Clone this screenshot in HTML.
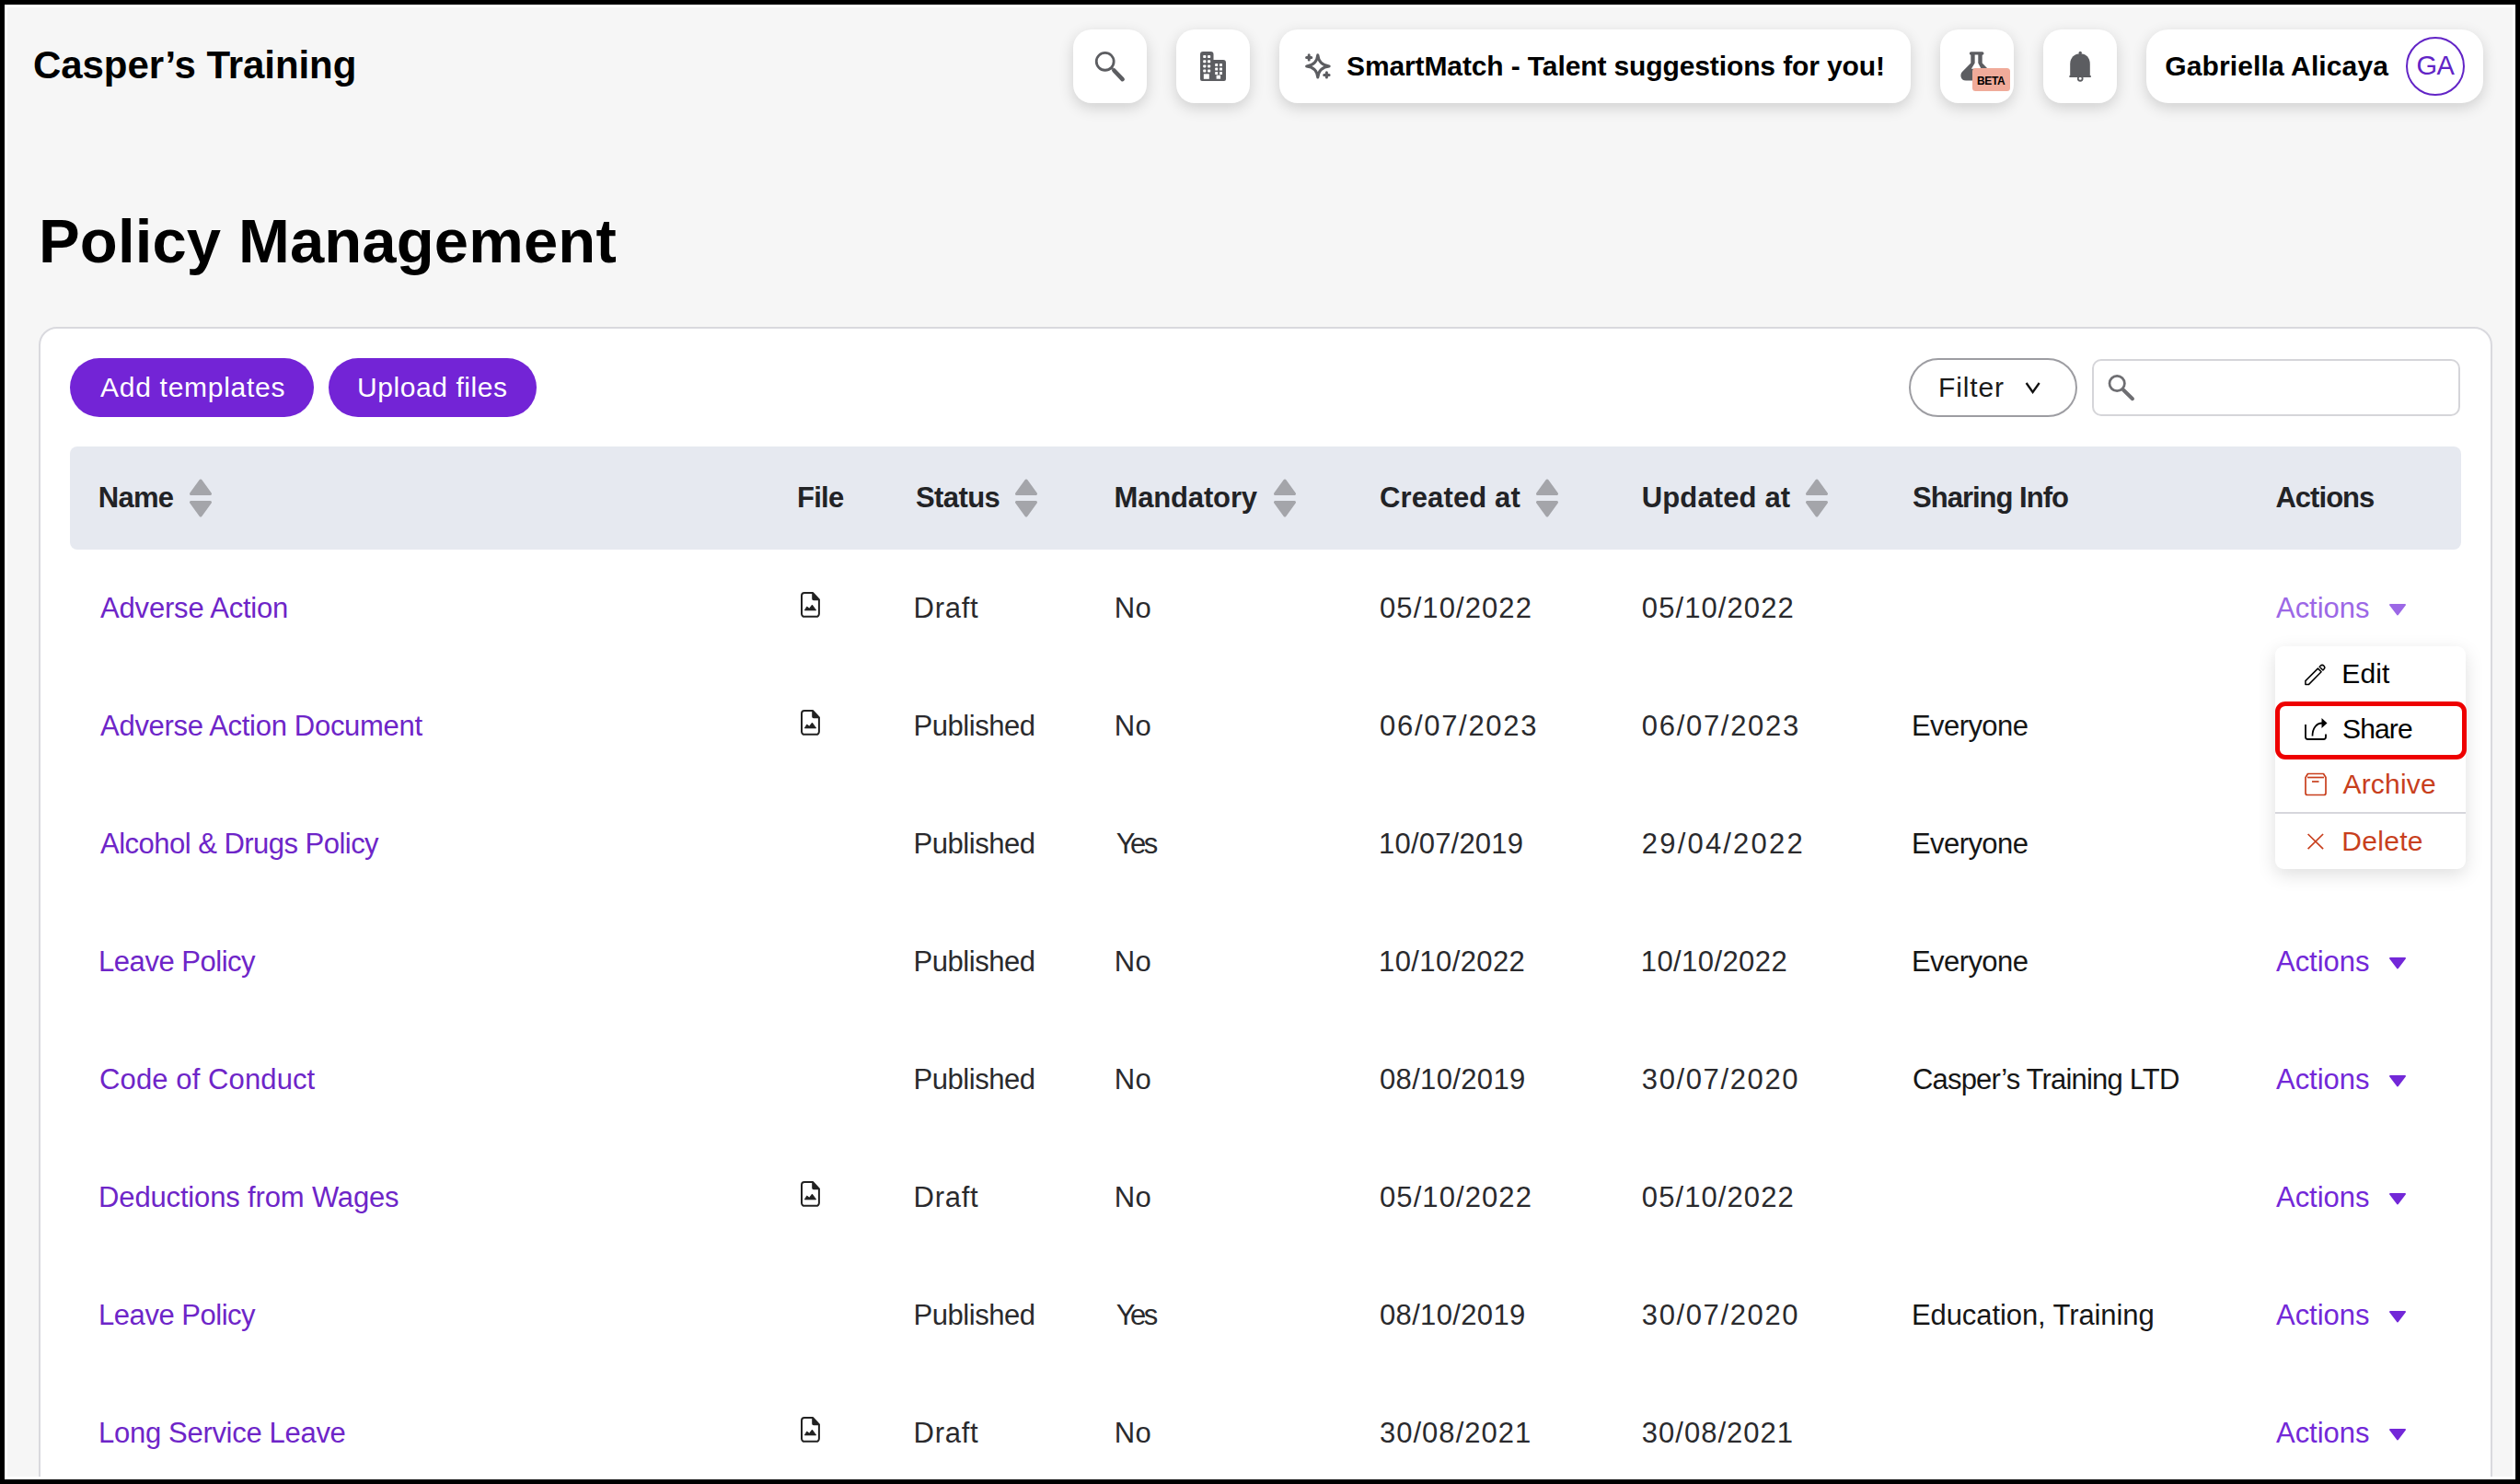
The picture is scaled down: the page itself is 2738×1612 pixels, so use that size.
<!DOCTYPE html>
<html><head><meta charset="utf-8"><title>Policy Management</title>
<style>
html,body{margin:0;padding:0;}
body{width:2738px;height:1612px;background:#000;position:relative;overflow:hidden;font-family:"Liberation Sans",sans-serif;}
#frame{position:absolute;left:5px;top:5px;width:2728px;height:1602px;background:#fff;}
#page{position:absolute;left:8px;top:8px;width:2722px;height:1596px;background:#f6f6f6;overflow:hidden;}
#inner{position:absolute;left:-8px;top:-8px;width:2738px;height:1612px;}
.t{position:absolute;line-height:1;white-space:nowrap;}
.b{position:absolute;display:block;}
</style></head><body>
<div id="frame"></div>
<div id="page"><div id="inner">
<div class="t" style="left:36.00px;top:50.45px;font-size:42px;font-weight:700;color:#000;letter-spacing:-0.068px;">Casper&#8217;s Training</div>
<div class="b" style="left:1166px;top:32px;width:80px;height:80px;background:#fff;border-radius:20px;box-shadow:0 5px 16px rgba(0,0,0,0.16);"></div>
<div class="b" style="left:1278px;top:32px;width:80px;height:80px;background:#fff;border-radius:20px;box-shadow:0 5px 16px rgba(0,0,0,0.16);"></div>
<div class="b" style="left:1390px;top:32px;width:686px;height:80px;background:#fff;border-radius:20px;box-shadow:0 5px 16px rgba(0,0,0,0.16);"></div>
<div class="b" style="left:2108px;top:32px;width:80px;height:80px;background:#fff;border-radius:20px;box-shadow:0 5px 16px rgba(0,0,0,0.16);"></div>
<div class="b" style="left:2220px;top:32px;width:80px;height:80px;background:#fff;border-radius:20px;box-shadow:0 5px 16px rgba(0,0,0,0.16);"></div>
<div class="b" style="left:2332px;top:32px;width:366px;height:80px;background:#fff;border-radius:20px;box-shadow:0 5px 16px rgba(0,0,0,0.16);border-radius:24px;"></div>
<svg class="b" style="left:1186px;top:52px;" width="40" height="40" viewBox="0 0 40 40"><circle cx="14.7" cy="14.8" r="9.45" fill="none" stroke="#5c5d61" stroke-width="2.8"/><line x1="21.5" y1="21.6" x2="23" y2="23.1" stroke="#5c5d61" stroke-width="2.8"/><line x1="24.4" y1="24.5" x2="33.6" y2="34.1" stroke="#5c5d61" stroke-width="4.6" stroke-linecap="round"/></svg>
<svg class="b" style="left:1304px;top:56px;" width="28" height="32" viewBox="0 0 28 32"><path d="M0,3 a3,3 0 0 1 3,-3 H11.5 a3,3 0 0 1 3,3 V9 H25 a3,3 0 0 1 3,3 V30 a2,2 0 0 1 -2,2 H2 a2,2 0 0 1 -2,-2 Z" fill="#5c5d61"/><rect x="3.2" y="4" width="3.2" height="3" rx="0.8" fill="#fff"/><rect x="3.2" y="9.2" width="3.2" height="3" rx="0.8" fill="#fff"/><rect x="3.2" y="14.4" width="3.2" height="3" rx="0.8" fill="#fff"/><rect x="3.2" y="19.6" width="3.2" height="3" rx="0.8" fill="#fff"/><rect x="8" y="4" width="3.2" height="3" rx="0.8" fill="#fff"/><rect x="8" y="9.2" width="3.2" height="3" rx="0.8" fill="#fff"/><rect x="8" y="14.4" width="3.2" height="3" rx="0.8" fill="#fff"/><rect x="8" y="19.6" width="3.2" height="3" rx="0.8" fill="#fff"/><rect x="16.2" y="13" width="3" height="3" rx="0.6" fill="#fff"/><rect x="16.2" y="17.6" width="3" height="3" rx="0.6" fill="#fff"/><rect x="16.2" y="22" width="3" height="3" rx="0.6" fill="#fff"/><rect x="21" y="13" width="3" height="3" rx="0.6" fill="#fff"/><rect x="21" y="17.6" width="3" height="3" rx="0.6" fill="#fff"/><rect x="21" y="22" width="3" height="3" rx="0.6" fill="#fff"/><rect x="3.8" y="24.3" width="6" height="5.5" fill="#fff"/><rect x="17.6" y="25.7" width="4.5" height="4" fill="#fff"/></svg>
<svg class="b" style="left:1412px;top:52px;" width="40" height="40" viewBox="0 0 40 40"><path d="M19.8,7.7 Q20.9,18.8 32.2,19.9 Q20.9,21 19.8,32.1 Q18.7,21 7.6,19.9 Q18.7,18.8 19.8,7.7 Z" fill="none" stroke="#5c5d61" stroke-width="3" stroke-linejoin="round"/><path d="M10.2,7.8 V13 M7.6,10.4 H12.8" stroke="#5c5d61" stroke-width="3" stroke-linecap="round"/><path d="M29.4,26.7 V32.1 M26.7,29.4 H32.1" stroke="#5c5d61" stroke-width="3" stroke-linecap="round"/></svg>
<div class="t" style="left:1463.00px;top:56.61px;font-size:30px;font-weight:700;color:#000;letter-spacing:-0.116px;">SmartMatch - Talent suggestions for you!</div>
<svg class="b" style="left:2126px;top:50px;" width="64" height="54" viewBox="0 0 64 54"><rect x="13.8" y="6.2" width="15.7" height="3.6" rx="1.8" fill="#5c5d61"/><path d="M15.3,9 H27.7 V18.6 L34,25 V37.5 H10 C4,37.5 3,31 6.2,27.8 L15.3,18.6 Z" fill="#5c5d61"/><path d="M19.65,9.5 H23.3 V18.6 L26.6,24.7 H15.9 L19.65,18.6 Z" fill="#fff"/></svg>
<div class="b" style="left:2143px;top:74.2px;width:40.7px;height:24.7px;background:#f0ab9a;border-radius:3.5px;"></div>
<div class="t" style="left:2148.00px;top:81.64px;font-size:12px;font-weight:700;color:#000;letter-spacing:-0.370px;">BETA</div>
<svg class="b" style="left:2240px;top:50px;" width="40" height="44" viewBox="0 0 40 44"><path d="M9.2,33 V19.5 C9.2,12.8 14,8.3 20.2,8.3 C26.4,8.3 30.8,12.8 30.8,19.5 V33 Z" fill="#5c5d61"/><rect x="8.3" y="32.1" width="23.6" height="1.8" rx="0.6" fill="#5c5d61"/><circle cx="20.2" cy="7.5" r="1.7" fill="#5c5d61"/><circle cx="20.2" cy="35.3" r="2.45" fill="none" stroke="#5c5d61" stroke-width="1.8"/></svg>
<div class="t" style="left:2352.30px;top:56.91px;font-size:30px;font-weight:700;color:#000;letter-spacing:0.118px;">Gabriella Alicaya</div>
<div class="b" style="left:2614px;top:40px;width:64px;height:64px;box-sizing:border-box;border:2.5px solid #6224c6;border-radius:50%;"></div>
<div class="t" style="left:2625.50px;top:57.45px;font-size:29px;font-weight:400;color:#6224c6;letter-spacing:0.000px;">G</div>
<div class="t" style="left:2647.60px;top:57.45px;font-size:29px;font-weight:400;color:#6224c6;letter-spacing:0.000px;">A</div>
<div class="t" style="left:42.00px;top:227.98px;font-size:67px;font-weight:700;color:#000;letter-spacing:0.138px;">Policy Management</div>
<div class="b" style="left:42px;top:355px;width:2666px;height:1400px;box-sizing:border-box;background:#fff;border:2px solid #d9d9de;border-radius:20px;"></div>
<div class="b" style="left:76px;top:389px;width:265px;height:64px;background:#7324d6;border-radius:32px;"></div>
<div class="t" style="left:109.00px;top:405.61px;font-size:30px;font-weight:400;color:#fff;letter-spacing:0.727px;">Add templates</div>
<div class="b" style="left:357px;top:389px;width:226px;height:64px;background:#7324d6;border-radius:32px;"></div>
<div class="t" style="left:388.00px;top:405.61px;font-size:30px;font-weight:400;color:#fff;letter-spacing:0.568px;">Upload files</div>
<div class="b" style="left:2074px;top:389px;width:183px;height:64px;box-sizing:border-box;border:2px solid #9d9da2;border-radius:32px;"></div>
<div class="t" style="left:2106.00px;top:406.11px;font-size:30px;font-weight:400;color:#1a1a1a;letter-spacing:0.865px;">Filter</div>
<svg class="b" style="left:2200px;top:414px;" width="18" height="14" viewBox="0 0 18 14"><path d="M1.6,2 L8.6,12 L15.7,2" fill="none" stroke="#111" stroke-width="2.3"/></svg>
<div class="b" style="left:2273px;top:390px;width:400px;height:62px;box-sizing:border-box;border:2px solid #d5d5d9;border-radius:10px;"></div>
<svg class="b" style="left:2288px;top:405px;" width="34" height="32" viewBox="0 0 34 32"><circle cx="12.2" cy="11.5" r="8.2" fill="none" stroke="#6e6e72" stroke-width="2.7"/><line x1="19" y1="18.5" x2="29" y2="28.2" stroke="#6e6e72" stroke-width="4" stroke-linecap="round"/></svg>
<div class="b" style="left:76px;top:485px;width:2598px;height:112px;background:#e6e9f0;border-radius:8px;"></div>
<div class="t" style="left:106.80px;top:524.76px;font-size:31px;font-weight:700;color:#222326;letter-spacing:-0.731px;">Name</div>
<div class="t" style="left:866.00px;top:524.76px;font-size:31px;font-weight:700;color:#222326;letter-spacing:-0.721px;">File</div>
<div class="t" style="left:995.00px;top:524.76px;font-size:31px;font-weight:700;color:#222326;letter-spacing:-0.600px;">Status</div>
<div class="t" style="left:1210.50px;top:524.76px;font-size:31px;font-weight:700;color:#222326;letter-spacing:-0.150px;">Mandatory</div>
<div class="t" style="left:1499.00px;top:524.76px;font-size:31px;font-weight:700;color:#222326;letter-spacing:0.124px;">Created at</div>
<div class="t" style="left:1783.80px;top:524.76px;font-size:31px;font-weight:700;color:#222326;letter-spacing:0.127px;">Updated at</div>
<div class="t" style="left:2078.00px;top:524.76px;font-size:31px;font-weight:700;color:#222326;letter-spacing:-0.990px;">Sharing Info</div>
<div class="t" style="left:2472.40px;top:524.76px;font-size:31px;font-weight:700;color:#222326;letter-spacing:-0.956px;">Actions</div>
<svg class="b" style="left:205px;top:519px;" width="26" height="44" viewBox="0 0 26 44"><path d="M13,3 L23.5,17.5 H2.5 Z M2.5,26.5 H23.5 L13,41 Z" fill="#a4a5aa" stroke="#a4a5aa" stroke-width="3" stroke-linejoin="round"/></svg>
<svg class="b" style="left:1101.5px;top:519px;" width="26" height="44" viewBox="0 0 26 44"><path d="M13,3 L23.5,17.5 H2.5 Z M2.5,26.5 H23.5 L13,41 Z" fill="#a4a5aa" stroke="#a4a5aa" stroke-width="3" stroke-linejoin="round"/></svg>
<svg class="b" style="left:1383px;top:519px;" width="26" height="44" viewBox="0 0 26 44"><path d="M13,3 L23.5,17.5 H2.5 Z M2.5,26.5 H23.5 L13,41 Z" fill="#a4a5aa" stroke="#a4a5aa" stroke-width="3" stroke-linejoin="round"/></svg>
<svg class="b" style="left:1668px;top:519px;" width="26" height="44" viewBox="0 0 26 44"><path d="M13,3 L23.5,17.5 H2.5 Z M2.5,26.5 H23.5 L13,41 Z" fill="#a4a5aa" stroke="#a4a5aa" stroke-width="3" stroke-linejoin="round"/></svg>
<svg class="b" style="left:1961px;top:519px;" width="26" height="44" viewBox="0 0 26 44"><path d="M13,3 L23.5,17.5 H2.5 Z M2.5,26.5 H23.5 L13,41 Z" fill="#a4a5aa" stroke="#a4a5aa" stroke-width="3" stroke-linejoin="round"/></svg>
<div class="t" style="left:109.10px;top:644.76px;font-size:31px;font-weight:400;color:#6e25c8;letter-spacing:-0.196px;">Adverse Action</div>
<svg class="b" style="left:860px;top:635px;" width="40" height="45" viewBox="0 0 40 45"><path d="M11,12 a3,3 0 0 1 3,-3 H23 L29.9,16.4 V31.8 a3,3 0 0 1 -3,3 H14 a3,3 0 0 1 -3,-3 Z" fill="none" stroke="#222" stroke-width="2" stroke-linejoin="round"/><path d="M23,9.6 V15.4 a1,1 0 0 0 1,1 H29.6 Z" fill="#222" stroke="#222" stroke-width="1.6" stroke-linejoin="round"/><path d="M14.25,27.9 L16.7,24 L19.4,26.1 L22.4,22.1 L26.7,27.9 Z" fill="#222" stroke="#222" stroke-width="0.8" stroke-linejoin="round"/></svg>
<div class="t" style="left:992.60px;top:644.76px;font-size:31px;font-weight:400;color:#2a2a2d;letter-spacing:0.709px;">Draft</div>
<div class="t" style="left:1210.70px;top:644.76px;font-size:31px;font-weight:400;color:#2a2a2d;letter-spacing:0.313px;">No</div>
<div class="t" style="left:1499.00px;top:644.76px;font-size:31px;font-weight:400;color:#2a2a2d;letter-spacing:1.088px;">05/10/2022</div>
<div class="t" style="left:1783.80px;top:644.76px;font-size:31px;font-weight:400;color:#2a2a2d;letter-spacing:1.088px;">05/10/2022</div>
<div class="t" style="left:2473.00px;top:644.76px;font-size:31px;font-weight:400;color:#9c68e6;letter-spacing:-0.026px;">Actions</div>
<svg class="b" style="left:2595px;top:655px;" width="20" height="14" viewBox="0 0 20 14"><path d="M2,2 H18 L10,12.5 Z" fill="#9c68e6" stroke="#9c68e6" stroke-width="2" stroke-linejoin="round"/></svg>
<div class="t" style="left:109.10px;top:772.76px;font-size:31px;font-weight:400;color:#6e25c8;letter-spacing:-0.308px;">Adverse Action Document</div>
<svg class="b" style="left:860px;top:763px;" width="40" height="45" viewBox="0 0 40 45"><path d="M11,12 a3,3 0 0 1 3,-3 H23 L29.9,16.4 V31.8 a3,3 0 0 1 -3,3 H14 a3,3 0 0 1 -3,-3 Z" fill="none" stroke="#222" stroke-width="2" stroke-linejoin="round"/><path d="M23,9.6 V15.4 a1,1 0 0 0 1,1 H29.6 Z" fill="#222" stroke="#222" stroke-width="1.6" stroke-linejoin="round"/><path d="M14.25,27.9 L16.7,24 L19.4,26.1 L22.4,22.1 L26.7,27.9 Z" fill="#222" stroke="#222" stroke-width="0.8" stroke-linejoin="round"/></svg>
<div class="t" style="left:992.60px;top:772.76px;font-size:31px;font-weight:400;color:#2a2a2d;letter-spacing:-0.464px;">Published</div>
<div class="t" style="left:1210.70px;top:772.76px;font-size:31px;font-weight:400;color:#2a2a2d;letter-spacing:0.313px;">No</div>
<div class="t" style="left:1499.00px;top:772.76px;font-size:31px;font-weight:400;color:#2a2a2d;letter-spacing:1.699px;">06/07/2023</div>
<div class="t" style="left:1783.80px;top:772.76px;font-size:31px;font-weight:400;color:#2a2a2d;letter-spacing:1.699px;">06/07/2023</div>
<div class="t" style="left:2077.00px;top:772.76px;font-size:31px;font-weight:400;color:#161616;letter-spacing:-0.575px;">Everyone</div>
<div class="t" style="left:109.10px;top:900.76px;font-size:31px;font-weight:400;color:#6e25c8;letter-spacing:-0.527px;">Alcohol &amp; Drugs Policy</div>
<div class="t" style="left:992.60px;top:900.76px;font-size:31px;font-weight:400;color:#2a2a2d;letter-spacing:-0.464px;">Published</div>
<div class="t" style="left:1212.70px;top:900.76px;font-size:31px;font-weight:400;color:#2a2a2d;letter-spacing:-2.536px;">Yes</div>
<div class="t" style="left:1498.00px;top:900.76px;font-size:31px;font-weight:400;color:#2a2a2d;letter-spacing:0.199px;">10/07/2019</div>
<div class="t" style="left:1783.80px;top:900.76px;font-size:31px;font-weight:400;color:#2a2a2d;letter-spacing:2.188px;">29/04/2022</div>
<div class="t" style="left:2077.00px;top:900.76px;font-size:31px;font-weight:400;color:#161616;letter-spacing:-0.575px;">Everyone</div>
<div class="t" style="left:107.10px;top:1028.76px;font-size:31px;font-weight:400;color:#6e25c8;letter-spacing:-0.479px;">Leave Policy</div>
<div class="t" style="left:992.60px;top:1028.76px;font-size:31px;font-weight:400;color:#2a2a2d;letter-spacing:-0.464px;">Published</div>
<div class="t" style="left:1210.70px;top:1028.76px;font-size:31px;font-weight:400;color:#2a2a2d;letter-spacing:0.313px;">No</div>
<div class="t" style="left:1498.00px;top:1028.76px;font-size:31px;font-weight:400;color:#2a2a2d;letter-spacing:0.410px;">10/10/2022</div>
<div class="t" style="left:1782.80px;top:1028.76px;font-size:31px;font-weight:400;color:#2a2a2d;letter-spacing:0.410px;">10/10/2022</div>
<div class="t" style="left:2077.00px;top:1028.76px;font-size:31px;font-weight:400;color:#161616;letter-spacing:-0.575px;">Everyone</div>
<div class="t" style="left:2473.00px;top:1028.76px;font-size:31px;font-weight:400;color:#7328d8;letter-spacing:-0.026px;">Actions</div>
<svg class="b" style="left:2595px;top:1039px;" width="20" height="14" viewBox="0 0 20 14"><path d="M2,2 H18 L10,12.5 Z" fill="#7328d8" stroke="#7328d8" stroke-width="2" stroke-linejoin="round"/></svg>
<div class="t" style="left:108.10px;top:1156.76px;font-size:31px;font-weight:400;color:#6e25c8;letter-spacing:0.104px;">Code of Conduct</div>
<div class="t" style="left:992.60px;top:1156.76px;font-size:31px;font-weight:400;color:#2a2a2d;letter-spacing:-0.464px;">Published</div>
<div class="t" style="left:1210.70px;top:1156.76px;font-size:31px;font-weight:400;color:#2a2a2d;letter-spacing:0.313px;">No</div>
<div class="t" style="left:1499.00px;top:1156.76px;font-size:31px;font-weight:400;color:#2a2a2d;letter-spacing:0.343px;">08/10/2019</div>
<div class="t" style="left:1783.80px;top:1156.76px;font-size:31px;font-weight:400;color:#2a2a2d;letter-spacing:1.621px;">30/07/2020</div>
<div class="t" style="left:2078.00px;top:1156.76px;font-size:31px;font-weight:400;color:#161616;letter-spacing:-0.818px;">Casper&#8217;s Training LTD</div>
<div class="t" style="left:2473.00px;top:1156.76px;font-size:31px;font-weight:400;color:#7328d8;letter-spacing:-0.026px;">Actions</div>
<svg class="b" style="left:2595px;top:1167px;" width="20" height="14" viewBox="0 0 20 14"><path d="M2,2 H18 L10,12.5 Z" fill="#7328d8" stroke="#7328d8" stroke-width="2" stroke-linejoin="round"/></svg>
<div class="t" style="left:107.10px;top:1284.76px;font-size:31px;font-weight:400;color:#6e25c8;letter-spacing:-0.157px;">Deductions from Wages</div>
<svg class="b" style="left:860px;top:1275px;" width="40" height="45" viewBox="0 0 40 45"><path d="M11,12 a3,3 0 0 1 3,-3 H23 L29.9,16.4 V31.8 a3,3 0 0 1 -3,3 H14 a3,3 0 0 1 -3,-3 Z" fill="none" stroke="#222" stroke-width="2" stroke-linejoin="round"/><path d="M23,9.6 V15.4 a1,1 0 0 0 1,1 H29.6 Z" fill="#222" stroke="#222" stroke-width="1.6" stroke-linejoin="round"/><path d="M14.25,27.9 L16.7,24 L19.4,26.1 L22.4,22.1 L26.7,27.9 Z" fill="#222" stroke="#222" stroke-width="0.8" stroke-linejoin="round"/></svg>
<div class="t" style="left:992.60px;top:1284.76px;font-size:31px;font-weight:400;color:#2a2a2d;letter-spacing:0.709px;">Draft</div>
<div class="t" style="left:1210.70px;top:1284.76px;font-size:31px;font-weight:400;color:#2a2a2d;letter-spacing:0.313px;">No</div>
<div class="t" style="left:1499.00px;top:1284.76px;font-size:31px;font-weight:400;color:#2a2a2d;letter-spacing:1.088px;">05/10/2022</div>
<div class="t" style="left:1783.80px;top:1284.76px;font-size:31px;font-weight:400;color:#2a2a2d;letter-spacing:1.088px;">05/10/2022</div>
<div class="t" style="left:2473.00px;top:1284.76px;font-size:31px;font-weight:400;color:#7328d8;letter-spacing:-0.026px;">Actions</div>
<svg class="b" style="left:2595px;top:1295px;" width="20" height="14" viewBox="0 0 20 14"><path d="M2,2 H18 L10,12.5 Z" fill="#7328d8" stroke="#7328d8" stroke-width="2" stroke-linejoin="round"/></svg>
<div class="t" style="left:107.10px;top:1412.76px;font-size:31px;font-weight:400;color:#6e25c8;letter-spacing:-0.479px;">Leave Policy</div>
<div class="t" style="left:992.60px;top:1412.76px;font-size:31px;font-weight:400;color:#2a2a2d;letter-spacing:-0.464px;">Published</div>
<div class="t" style="left:1212.70px;top:1412.76px;font-size:31px;font-weight:400;color:#2a2a2d;letter-spacing:-2.536px;">Yes</div>
<div class="t" style="left:1499.00px;top:1412.76px;font-size:31px;font-weight:400;color:#2a2a2d;letter-spacing:0.343px;">08/10/2019</div>
<div class="t" style="left:1783.80px;top:1412.76px;font-size:31px;font-weight:400;color:#2a2a2d;letter-spacing:1.621px;">30/07/2020</div>
<div class="t" style="left:2077.00px;top:1412.76px;font-size:31px;font-weight:400;color:#161616;letter-spacing:-0.095px;">Education, Training</div>
<div class="t" style="left:2473.00px;top:1412.76px;font-size:31px;font-weight:400;color:#7328d8;letter-spacing:-0.026px;">Actions</div>
<svg class="b" style="left:2595px;top:1423px;" width="20" height="14" viewBox="0 0 20 14"><path d="M2,2 H18 L10,12.5 Z" fill="#7328d8" stroke="#7328d8" stroke-width="2" stroke-linejoin="round"/></svg>
<div class="t" style="left:107.10px;top:1540.76px;font-size:31px;font-weight:400;color:#6e25c8;letter-spacing:-0.311px;">Long Service Leave</div>
<svg class="b" style="left:860px;top:1531px;" width="40" height="45" viewBox="0 0 40 45"><path d="M11,12 a3,3 0 0 1 3,-3 H23 L29.9,16.4 V31.8 a3,3 0 0 1 -3,3 H14 a3,3 0 0 1 -3,-3 Z" fill="none" stroke="#222" stroke-width="2" stroke-linejoin="round"/><path d="M23,9.6 V15.4 a1,1 0 0 0 1,1 H29.6 Z" fill="#222" stroke="#222" stroke-width="1.6" stroke-linejoin="round"/><path d="M14.25,27.9 L16.7,24 L19.4,26.1 L22.4,22.1 L26.7,27.9 Z" fill="#222" stroke="#222" stroke-width="0.8" stroke-linejoin="round"/></svg>
<div class="t" style="left:992.60px;top:1540.76px;font-size:31px;font-weight:400;color:#2a2a2d;letter-spacing:0.709px;">Draft</div>
<div class="t" style="left:1210.70px;top:1540.76px;font-size:31px;font-weight:400;color:#2a2a2d;letter-spacing:0.313px;">No</div>
<div class="t" style="left:1499.00px;top:1540.76px;font-size:31px;font-weight:400;color:#2a2a2d;letter-spacing:1.010px;">30/08/2021</div>
<div class="t" style="left:1783.80px;top:1540.76px;font-size:31px;font-weight:400;color:#2a2a2d;letter-spacing:1.010px;">30/08/2021</div>
<div class="t" style="left:2473.00px;top:1540.76px;font-size:31px;font-weight:400;color:#7328d8;letter-spacing:-0.026px;">Actions</div>
<svg class="b" style="left:2595px;top:1551px;" width="20" height="14" viewBox="0 0 20 14"><path d="M2,2 H18 L10,12.5 Z" fill="#7328d8" stroke="#7328d8" stroke-width="2" stroke-linejoin="round"/></svg>
<div class="b" style="left:2472px;top:702px;width:207px;height:242px;background:#fff;border-radius:9px;box-shadow:0 6px 20px rgba(0,0,0,0.13);"></div>
<div class="b" style="left:2472px;top:882px;width:207px;height:2px;background:#d6d6dc;"></div>
<div class="b" style="left:2472px;top:762px;width:208px;height:63px;box-sizing:border-box;border:5px solid #ee0000;border-radius:11px;"></div>
<svg class="b" style="left:2495px;top:710px;" width="40" height="40" viewBox="0 0 40 40"><path d="M9.9,33.4 V29.6 L23.4,16.1 L27.1,19.8 L13.6,33.4 Z" fill="none" stroke="#000" stroke-width="1.5" stroke-linejoin="round"/><path d="M25.2,14.3 L26.2,13.3 a2.6,2.6 0 0 1 3.7,3.7 L28.9,18 Z" fill="none" stroke="#000" stroke-width="1.5" stroke-linejoin="round"/></svg>
<div class="t" style="left:2544.20px;top:716.81px;font-size:30px;font-weight:400;color:#000;letter-spacing:0.180px;">Edit</div>
<svg class="b" style="left:2502px;top:778px;" width="28" height="28" viewBox="0 0 28 28"><path d="M3,9 V22.5 a2.5,2.5 0 0 0 2.5,2.5 H22.5 a2.5,2.5 0 0 0 2.5,-2.5 V19.5" fill="none" stroke="#000" stroke-width="1.8"/><path d="M10.5,21.5 C10.5,13 15,7.5 21,7.5" fill="none" stroke="#000" stroke-width="1.8"/><path d="M20.5,2 L26.5,7.5 L20.5,13 Z" fill="#000"/></svg>
<div class="t" style="left:2545.00px;top:776.61px;font-size:30px;font-weight:400;color:#000;letter-spacing:-0.842px;">Share</div>
<svg class="b" style="left:2502px;top:838px;" width="28" height="28" viewBox="0 0 28 28"><path d="M3,6.5 L5.5,2.5 H22.5 L25,6.5 V23.5 a2,2 0 0 1 -2,2 H5 a2,2 0 0 1 -2,-2 Z" fill="none" stroke="#c83f1d" stroke-width="1.7" stroke-linejoin="round"/><path d="M5,6.5 H23" stroke="#c83f1d" stroke-width="1.7"/><path d="M10,11 H17.5" stroke="#c83f1d" stroke-width="1.7"/></svg>
<div class="t" style="left:2545.50px;top:837.00px;font-size:30px;font-weight:400;color:#c83f1d;letter-spacing:0.175px;">Archive</div>
<svg class="b" style="left:2502px;top:900px;" width="28" height="28" viewBox="0 0 28 28"><path d="M5.6,6 L22.1,22.1 M22.1,6 L5.6,22.1" stroke="#c83f1d" stroke-width="1.7"/></svg>
<div class="t" style="left:2544.30px;top:898.90px;font-size:30px;font-weight:400;color:#c83f1d;letter-spacing:0.293px;">Delete</div>
</div></div>
</body></html>
